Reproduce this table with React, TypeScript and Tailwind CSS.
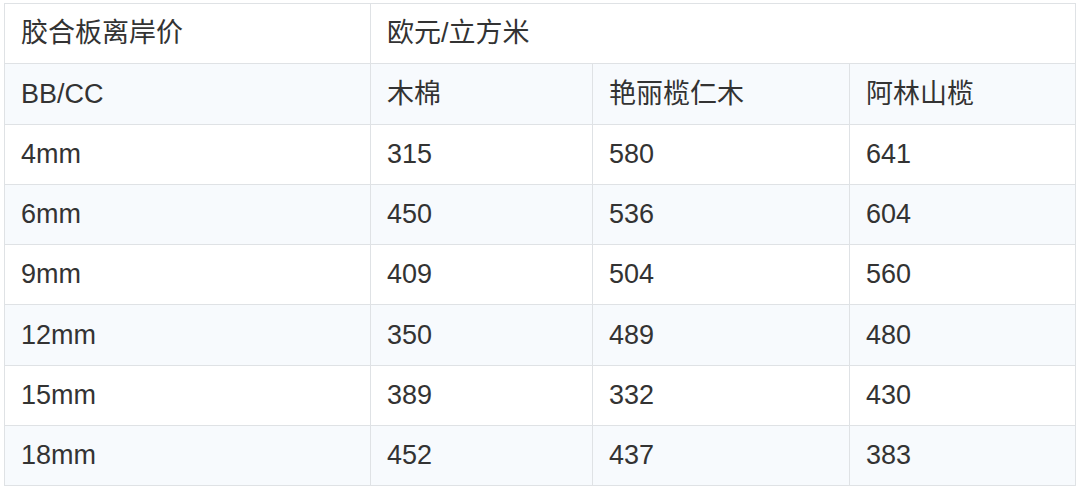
import React from 'react';

const rows: string[][] = [
  ['BB/CC', '木棉', '艳丽榄仁木', '阿林山榄'],
  ['4mm', '315', '580', '641'],
  ['6mm', '450', '536', '604'],
  ['9mm', '409', '504', '560'],
  ['12mm', '350', '489', '480'],
  ['15mm', '389', '332', '430'],
  ['18mm', '452', '437', '383'],
];

const cell = 'border border-[#dfe2e5] px-4 text-left align-middle font-normal';

const App: React.FC = () => {
  return (
    <div className="w-[1080px] h-[494px] bg-white pt-[3px] pl-[4px] overflow-hidden">
      <table
        className="w-[1071px] table-fixed border-collapse text-[27px] leading-none text-[#333333]"
        style={{ fontFamily: '"Liberation Sans", "Noto Sans CJK SC", sans-serif' }}
      >
        <colgroup>
          <col className="w-[366px]" />
          <col className="w-[222px]" />
          <col className="w-[257px]" />
          <col className="w-[226px]" />
        </colgroup>
        <thead>
          <tr className="h-[60px] bg-white">
            <th className={cell}>胶合板离岸价</th>
            <th className={cell} colSpan={3}>欧元/立方米</th>
          </tr>
        </thead>
        <tbody>
          {rows.map((row, i) => (
            <tr
              key={row[0]}
              className={`${i === 0 || i === 4 ? 'h-[61px]' : 'h-[60px]'} ${i % 2 === 0 ? 'bg-[#f7fafd]' : 'bg-white'}`}
            >
              {row.map((v, j) => (
                <td key={j} className={cell}>{v}</td>
              ))}
            </tr>
          ))}
        </tbody>
      </table>
    </div>
  );
};

export default App;
